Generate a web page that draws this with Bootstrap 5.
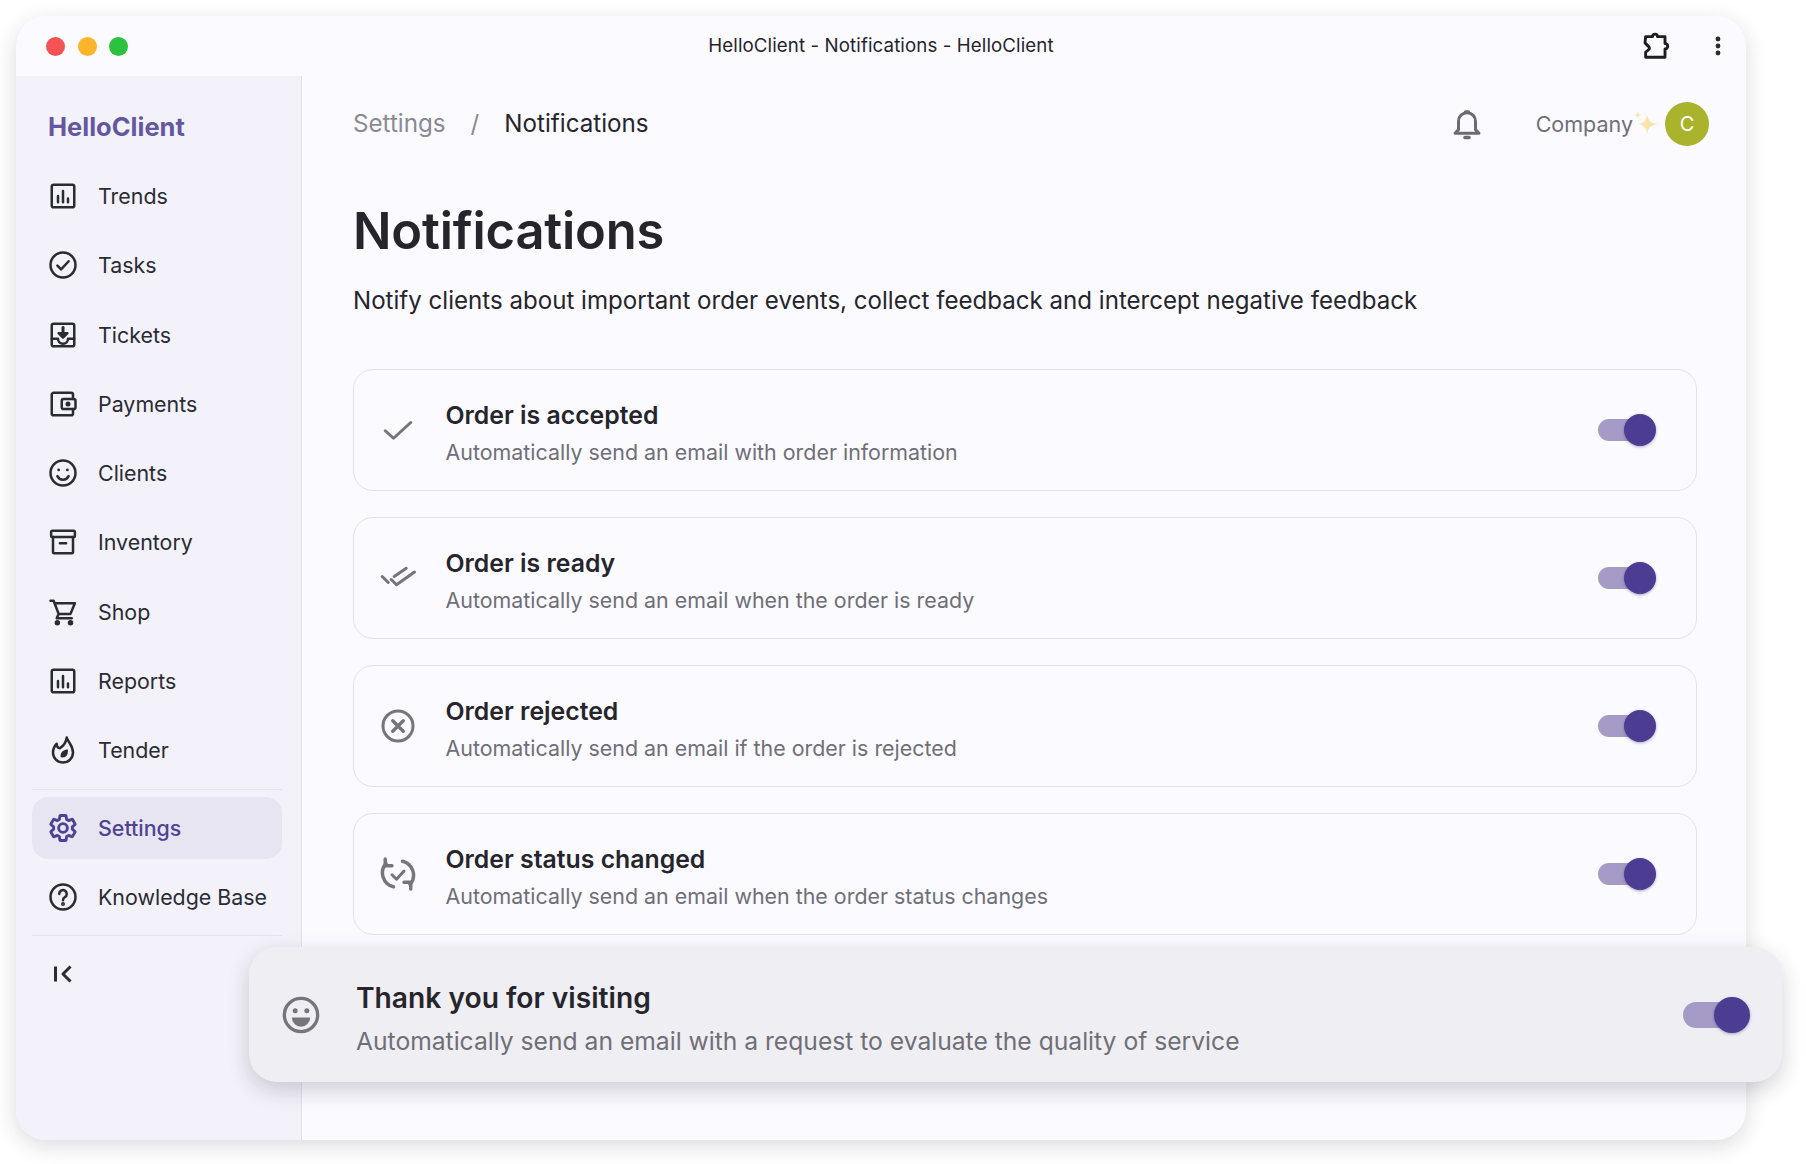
<!DOCTYPE html>
<html lang="en">
<head>
    <meta charset="UTF-8">
    <title>HelloClient - Notifications</title>
    <link href="https://cdn.jsdelivr.net/npm/bootstrap@5.3.0/dist/css/bootstrap.min.css" rel="stylesheet">
    <style>
        body {
            font-family: Inter, "Liberation Sans", sans-serif;
            background-color: #fff;
            color: #25252b;
            height: 1164px;
            overflow: hidden;
        }

        .app-shell {
            position: relative;
            padding: 16px 60px 24px 16px;
            height: 1164px;
        }

        .app-window {
            height: 1124px;
            border-radius: 30px;
            background-color: #fbfaff;
            box-shadow: 0 6px 22px rgba(30, 30, 50, 0.16);
            overflow: hidden;
        }

        .title-bar {
            height: 60px;
            padding: 0 24px 0 30px;
        }

        .title-text { font-size: 18.700px; letter-spacing: 0.1px; }
        .lights { column-gap: 12.500px; }
        .dot-light { width: 19px; height: 19px; border-radius: 50%; }
        .light-red { background-color: #f55353; }
        .light-amber { background-color: #fdb52e; }
        .light-green { background-color: #2cc13f; }
        .puzzle-ico { color: #1d1d22; margin-right: 44px; }

        .side-col {
            width: 286px;
            background-color: #f3f2fa;
            border-right: 1px solid #e2e1e9;
            padding: 0 19px 0 16px;
        }

        .brand-name {
            font-size: 25.500px;
            font-weight: 700;
            color: #63589f;
            padding: 34px 0 21px 16px;
            line-height: 34px;
        }

        .side-link {
            height: 62px;
            margin-bottom: 7.300px;
            padding-left: 16px;
            gap: 20px;
            font-size: 21.400px;
            color: #2b2b33;
            border-radius: 16px;
            text-decoration: none;
        }

        .side-link svg { width: 30px; height: 30px; flex: none; }
        .side-link.is-active { background-color: #e8e5f3; color: #4e4391; font-weight: 500; }
        .side-rule { border-top: 1px solid #e6e5ed; margin: 0 0 7px; }

        .crumb-bar { height: 80px; margin-bottom: 34.500px; }
        .crumb-muted { color: #8a8a92; }
        .crumb-text { font-size: 24.200px; }
        .crumb-sep { color: #8a8a92; margin: 0 25px; }
        .bell-ico { color: #6b6b71; margin-right: 52px; }
        .spark-ico { margin: 0 5px 0 -1px; }

        .main-col { padding: 8px 49px 0 51px; }
        .page-title { font-size: 50.700px; font-weight: 600; line-height: 64px; margin: 0 0 20px; letter-spacing: -0.2px; }
        .page-sub { font-size: 24.100px; line-height: 36px; margin-bottom: 50px; }

        .notice-row {
            height: 122px;
            margin-bottom: 26.200px;
            border: 1.500px solid #e4e3ea;
            border-radius: 20px;
            padding: 0 46px 0 26px;
        }

        .notice-row svg { width: 36px; height: 36px; flex: none; margin-right: 29.500px; }
        .notice-text { padding-top: 6px; }
        .notice-title { font-size: 24.800px; font-weight: 600; line-height: 34px; }
        .notice-desc { font-size: 21.420px; color: #6f6f77; line-height: 32px; margin-top: 4px; }

        .toggle-pill {
            position: relative;
            display: block;
            width: 52px;
            height: 22px;
            border-radius: 11px;
            background-color: #a59bc6;
            flex: none;
        }

        .toggle-pill::after {
            content: "";
            position: absolute;
            right: -6px;
            top: -5px;
            width: 32px;
            height: 32px;
            border-radius: 50%;
            background-color: #4d3d92;
            box-shadow: 0 1px 3px rgba(50, 40, 110, 0.4);
        }

        .float-row {
            position: absolute;
            left: 249px;
            top: 947px;
            width: 1533px;
            height: 135px;
            border-radius: 28px;
            background-color: #efeef3;
            box-shadow: 0 8px 22px rgba(30, 30, 50, 0.2);
            padding: 0 39px 0 32px;
        }

        .float-row svg { width: 40px; height: 40px; flex: none; margin-right: 35px; }
        .float-text { padding-top: 8px; }
        .float-title { font-size: 28.200px; font-weight: 600; line-height: 38px; }
        .float-desc { font-size: 24.650px; color: #6f6f77; line-height: 36px; margin-top: 6px; }
        .float-row .toggle-pill { width: 60px; height: 26px; border-radius: 13px; }
        .float-row .toggle-pill::after { width: 36px; height: 36px; top: -5px; right: -7px; }

        .company-name { font-size: 21.500px; color: #6f6f77; }
        .avatar-dot {
            width: 44px;
            height: 44px;
            border-radius: 50%;
            background-color: #a9b42c;
            color: #fff;
            font-size: 20px;
            margin-right: -12px;
        }

        .ico { fill: none; stroke: currentColor; stroke-width: 2; stroke-linecap: round; stroke-linejoin: round; }
        .ico-grey { color: #75757b; }
    </style>
</head>
<body>
    <div class="app-shell">
        <div class="app-window d-flex flex-column">
            <div class="title-bar d-flex align-items-center flex-shrink-0 position-relative">
                <div class="lights d-flex me-auto">
                    <span class="dot-light light-red"></span>
                    <span class="dot-light light-amber"></span>
                    <span class="dot-light light-green"></span>
                </div>
                <div class="title-text position-absolute top-50 start-50 translate-middle">HelloClient - Notifications - HelloClient</div>
                <svg class="ico puzzle-ico" width="30" height="30" viewBox="0 0 24 24"><path d="M4.500 4.500H10a2 2 0 0 1 4 0h6v5.500a2.200 2.200 0 0 1 0 4.400V21H4.500v-4l2.500-2.200a1.500 1.500 0 0 0 0-2.300L4 9.500z" stroke-width="2.300"/></svg>
                <svg width="8" height="24" viewBox="0 0 8 24" fill="#2a2a30"><circle cx="4" cy="5" r="2.400"/><circle cx="4" cy="12" r="2.400"/><circle cx="4" cy="19" r="2.400"/></svg>
            </div>
            <div class="d-flex flex-grow-1">
                <nav class="side-col flex-shrink-0">
                    <div class="brand-name">HelloClient</div>
                    <a class="side-link d-flex align-items-center" href="#"><svg class="ico" viewBox="0 0 24 24"><rect x="3" y="3" width="18" height="18" rx="1.500"/><path d="M8 12v5M12 8v9M16 14v3"/></svg>Trends</a>
                    <a class="side-link d-flex align-items-center" href="#"><svg class="ico" viewBox="0 0 24 24"><circle cx="12" cy="12" r="10"/><path d="M7.500 12.500l3 3 6-6.500"/></svg>Tasks</a>
                    <a class="side-link d-flex align-items-center" href="#"><svg class="ico" viewBox="0 0 24 24"><rect x="3" y="3" width="18" height="18" rx="1.500"/><path d="M3 15h5a4 4 0 0 0 8 0h5"/><path d="M12 6v6" stroke-width="2.400"/><path d="M8.500 10.500h7L12 14z" fill="currentColor"/></svg>Tickets</a>
                    <a class="side-link d-flex align-items-center" href="#"><svg class="ico" viewBox="0 0 24 24"><path d="M20 8V4.500A1.500 1.500 0 0 0 18.500 3h-14A1.500 1.500 0 0 0 3 4.500v15A1.500 1.500 0 0 0 4.500 21h14a1.500 1.500 0 0 0 1.500-1.500V16"/><rect x="11" y="8" width="11" height="8" rx="1.500"/><circle cx="16" cy="12" r="1" fill="currentColor"/></svg>Payments</a>
                    <a class="side-link d-flex align-items-center" href="#"><svg class="ico" viewBox="0 0 24 24"><circle cx="12" cy="12" r="10"/><circle cx="8.500" cy="9.500" r="1.100" fill="currentColor" stroke="none"/><circle cx="15.500" cy="9.500" r="1.100" fill="currentColor" stroke="none"/><path d="M7.500 14.500a5 5 0 0 0 9 0"/></svg>Clients</a>
                    <a class="side-link d-flex align-items-center" href="#"><svg class="ico" viewBox="0 0 24 24"><rect x="2.500" y="3" width="19" height="5" rx="1"/><path d="M4 8v12a1 1 0 0 0 1 1h14a1 1 0 0 0 1-1V8M9.500 13h5"/></svg>Inventory</a>
                    <a class="side-link d-flex align-items-center" href="#"><svg class="ico" viewBox="0 0 24 24"><path d="M2 3h2.500l4 10.500h9.500L21.500 5H5.500M8.500 13.500L7 17h12"/><circle cx="7.500" cy="20.500" r="1.200" fill="currentColor"/><circle cx="18" cy="20.500" r="1.200" fill="currentColor"/></svg>Shop</a>
                    <a class="side-link d-flex align-items-center" href="#"><svg class="ico" viewBox="0 0 24 24"><rect x="3" y="3" width="18" height="18" rx="1.500"/><path d="M8 12v5M12 8v9M16 14v3"/></svg>Reports</a>
                    <a class="side-link d-flex align-items-center" href="#"><svg class="ico" viewBox="0 0 24 24"><path d="M15 2c1 4 5 6 5 12a8 8 0 0 1-16 0c0-3 1-5 3-7 0 2 1 3.500 2.500 3.500C12 9 14.500 6 15 2z"/><path d="M15 12.500c0 3-1.500 4.500-4 4.500 0-2.500 1.500-4 4-4.500z" fill="currentColor"/></svg>Tender</a>
                    <div class="side-rule"></div>
                    <a class="side-link is-active d-flex align-items-center" href="#"><svg class="ico" viewBox="0 0 24 24"><path d="M19.430 12.980c.04-.32.07-.64.07-.98 0-.34-.03-.66-.07-.98l2.110-1.650c.19-.15.24-.42.12-.64l-2-3.460c-.09-.16-.26-.25-.44-.25-.06 0-.12.01-.17.03l-2.490 1c-.52-.4-1.080-.73-1.690-.98l-.38-2.650C14.460 2.180 14.250 2 14 2h-4c-.25 0-.46.18-.49.42l-.38 2.650c-.61.25-1.170.59-1.690.98l-2.490-1c-.06-.02-.12-.03-.18-.03-.17 0-.34.09-.43.25l-2 3.460c-.13.22-.07.49.12.64l2.110 1.650c-.04.32-.07.65-.07.98 0 .33.03.66.07.98l-2.110 1.650c-.19.15-.24.42-.12.64l2 3.460c.09.16.26.25.44.25.06 0 .12-.01.17-.03l2.490-1c.52.4 1.080.73 1.690.98l.38 2.650c.03.24.24.42.49.42h4c.25 0 .46-.18.49-.42l.38-2.650c.61-.25 1.170-.59 1.690-.98l2.490 1c.06.02.12.03.18.03.17 0 .34-.09.43-.25l2-3.460c.12-.22.07-.49-.12-.64l-2.110-1.650z" stroke-width="2.300"/><circle cx="12" cy="12" r="3.500" stroke-width="2.300"/></svg>Settings</a>
                    <a class="side-link d-flex align-items-center" href="#"><svg class="ico" viewBox="0 0 24 24"><circle cx="12" cy="12" r="10"/><path d="M9 9.500a3 3 0 1 1 4.500 2.600c-1 .6-1.500 1.200-1.500 2.400"/><circle cx="12" cy="17.500" r=".6" fill="currentColor"/></svg>Knowledge Base</a>
                    <div class="side-rule"></div>
                    <a class="side-link d-flex align-items-center" href="#" aria-label="Collapse"><svg class="ico" viewBox="0 0 24 24"><path d="M6 6v12M18 6l-6 6 6 6" stroke-width="2.400" stroke-linecap="butt"/></svg></a>
                </nav>
                <main class="main-col flex-grow-1">
                    <div class="crumb-bar d-flex align-items-center">
                        <span class="crumb-text crumb-muted">Settings</span>
                        <span class="crumb-text crumb-sep">/</span>
                        <span class="crumb-text">Notifications</span>
                        <svg class="ico bell-ico ms-auto" width="34" height="34" viewBox="0 0 24 24"><path d="M3.500 18.500h17l-2.500-2.500v-6a6 6 0 0 0-12 0v6z" stroke-width="2.100"/><path d="M10.500 21.500h3M11 3.500h2" stroke-width="2.400"/></svg>
                        <span class="company-name">Company</span>
                        <svg class="spark-ico" width="28" height="28" viewBox="0 0 24 24" fill="#fbe3ab"><path d="M13 4c1 5 2.500 7 9 8-6.500 1-8 3-9 9-1-6-2.500-8-8-9 5.500-1 7-3 8-8z"/><path d="M5 1c.4 2.200.9 2.800 3.200 3.200C5.900 4.600 5.400 5.200 5 7.500c-.4-2.300-.9-2.900-3-3.300 2.100-.4 2.600-1 3-3.200z"/></svg>
                        <span class="avatar-dot d-flex align-items-center justify-content-center">C</span>
                    </div>
                    <h1 class="page-title">Notifications</h1>
                    <p class="page-sub">Notify clients about important order events, collect feedback and intercept negative feedback</p>

                    <div class="notice-row d-flex align-items-center">
                        <svg class="ico ico-grey" viewBox="0 0 24 24"><path d="M3.500 12.500l5.500 5L20.500 7"/></svg>
                        <div class="notice-text flex-grow-1">
                            <div class="notice-title">Order is accepted</div>
                            <div class="notice-desc">Automatically send an email with order information</div>
                        </div>
                        <span class="toggle-pill"></span>
                    </div>
                    <div class="notice-row d-flex align-items-center">
                        <svg class="ico ico-grey" viewBox="0 0 24 24"><path d="M1.500 11l4 4M7.500 13l3.500 3.500 12-8.500M9.500 11l8-5.500"/></svg>
                        <div class="notice-text flex-grow-1">
                            <div class="notice-title">Order is ready</div>
                            <div class="notice-desc">Automatically send an email when the order is ready</div>
                        </div>
                        <span class="toggle-pill"></span>
                    </div>
                    <div class="notice-row d-flex align-items-center">
                        <svg class="ico ico-grey" viewBox="0 0 24 24"><circle cx="12" cy="12" r="10"/><path d="M8.500 8.500l7 7M15.500 8.500l-7 7" stroke-width="2.300"/></svg>
                        <div class="notice-text flex-grow-1">
                            <div class="notice-title">Order rejected</div>
                            <div class="notice-desc">Automatically send an email if the order is rejected</div>
                        </div>
                        <span class="toggle-pill"></span>
                    </div>
                    <div class="notice-row d-flex align-items-center">
                        <svg class="ico ico-grey" viewBox="0 0 24 24"><path d="M15 3.500a9.500 9.500 0 0 1 5 15.500M9 20.500A9.500 9.500 0 0 1 4 5" stroke-width="2.300"/><path d="M3.500 2v4.500H8M20.500 22v-4.500H16" stroke-width="2.300"/><path d="M8 12.500l3 3 5-5.500"/></svg>
                        <div class="notice-text flex-grow-1">
                            <div class="notice-title">Order status changed</div>
                            <div class="notice-desc">Automatically send an email when the order status changes</div>
                        </div>
                        <span class="toggle-pill"></span>
                    </div>
                </main>
            </div>
        </div>

        <div class="float-row d-flex align-items-center">
            <svg class="ico ico-grey" viewBox="0 0 24 24"><circle cx="12" cy="12" r="10"/><circle cx="8.500" cy="9.500" r="1.500" fill="currentColor" stroke="none"/><circle cx="15.500" cy="9.500" r="1.500" fill="currentColor" stroke="none"/><path d="M6.500 13.500h11a5.500 5.500 0 0 1-11 0z" fill="currentColor" stroke="none"/></svg>
            <div class="float-text flex-grow-1">
                <div class="float-title">Thank you for visiting</div>
                <div class="float-desc">Automatically send an email with a request to evaluate the quality of service</div>
            </div>
            <span class="toggle-pill"></span>
        </div>
    </div>

    <script src="https://cdn.jsdelivr.net/npm/bootstrap@5.3.0/dist/js/bootstrap.bundle.min.js"></script>
</body>
</html>
